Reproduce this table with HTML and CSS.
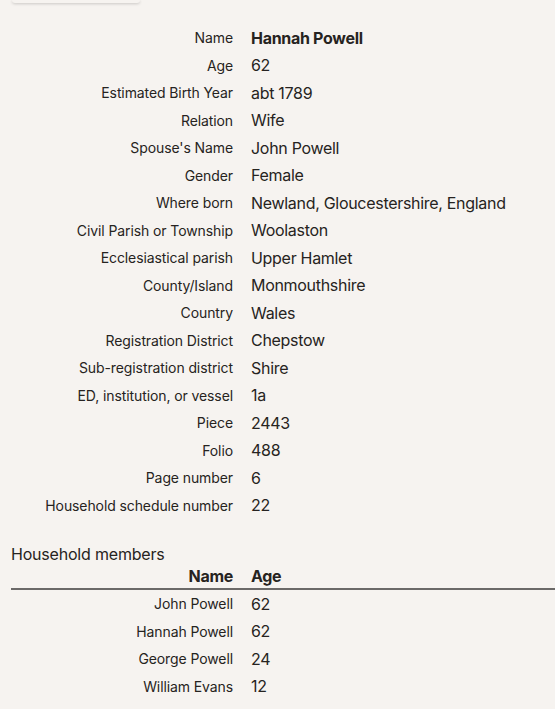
FILE: index.html
```html
<!DOCTYPE html>
<html>
<head>
<meta charset="utf-8">
<link rel="stylesheet" href="styles.css">
</head>
<body>
<div class="card-edge"></div>
<table class="facts">
  <tr><th>Name</th><td class="strong">Hannah Powell</td></tr>
  <tr><th>Age</th><td>62</td></tr>
  <tr><th>Estimated Birth Year</th><td>abt 1789</td></tr>
  <tr><th>Relation</th><td>Wife</td></tr>
  <tr><th>Spouse's Name</th><td>John Powell</td></tr>
  <tr><th>Gender</th><td>Female</td></tr>
  <tr><th>Where born</th><td>Newland, Gloucestershire, England</td></tr>
  <tr><th>Civil Parish or Township</th><td>Woolaston</td></tr>
  <tr><th>Ecclesiastical parish</th><td>Upper Hamlet</td></tr>
  <tr><th>County/Island</th><td>Monmouthshire</td></tr>
  <tr><th>Country</th><td>Wales</td></tr>
  <tr><th>Registration District</th><td>Chepstow</td></tr>
  <tr><th>Sub-registration district</th><td>Shire</td></tr>
  <tr><th>ED, institution, or vessel</th><td>1a</td></tr>
  <tr><th>Piece</th><td>2443</td></tr>
  <tr><th>Folio</th><td>488</td></tr>
  <tr><th>Page number</th><td>6</td></tr>
  <tr><th>Household schedule number</th><td>22</td></tr>
</table>
<h2 class="section-title">Household members</h2>
<table class="members">
  <thead>
    <tr><th>Name</th><th class="age">Age</th></tr>
  </thead>
  <tbody>
    <tr><td class="name">John Powell</td><td>62</td></tr>
    <tr><td class="name">Hannah Powell</td><td>62</td></tr>
    <tr><td class="name">George Powell</td><td>24</td></tr>
    <tr><td class="name">William Evans</td><td>12</td></tr>
  </tbody>
</table>
</body>
</html>
```

FILE: styles.css
```css
html, body {
  margin: 0;
  padding: 0;
  background: #f6f3f0;
}
body {
  font-family: Inter, "Liberation Sans", sans-serif;
  color: #262321;
  padding: 0 0 0 11px;
}
.card-edge {
  margin-left: 1px;
  width: 128px;
  height: 3px;
  background: #f6f3f0;
  border-radius: 0 0 8px 8px;
  box-shadow: 0 1px 3px rgba(0,0,0,0.18);
}
.facts {
  border-collapse: collapse;
  margin-top: 21px;
}
.facts th {
  width: 222px;
  padding: 0 18px 0 0;
  text-align: right;
  font-weight: 400;
  font-size: 14px;
  letter-spacing: -0.1px;
  height: 27.5px;
}
.facts td {
  padding: 0;
  font-size: 16px;
  letter-spacing: -0.3px;
  height: 27.5px;
}
.facts td.strong {
  font-weight: 700;
}
.section-title {
  font-size: 16px;
  font-weight: 400;
  letter-spacing: -0.2px;
  margin: 25px 0 0 0;
  line-height: 20px;
}
.members {
  border-collapse: collapse;
  width: 100%;
}
.members thead th {
  font-size: 16px;
  font-weight: 700;
  letter-spacing: -0.3px;
  text-align: left;
  padding: 0;
  height: 24px;
  border-bottom: 2px solid #6b6968;
}
.members thead th:first-child {
  width: 222px;
  text-align: right;
  padding-right: 18px;
}
.members td {
  padding: 0;
  font-size: 16px;
  letter-spacing: -0.3px;
  height: 27.5px;
}
.members td.name {
  text-align: right;
  padding-right: 18px;
  font-size: 14px;
  letter-spacing: -0.1px;
}
```
